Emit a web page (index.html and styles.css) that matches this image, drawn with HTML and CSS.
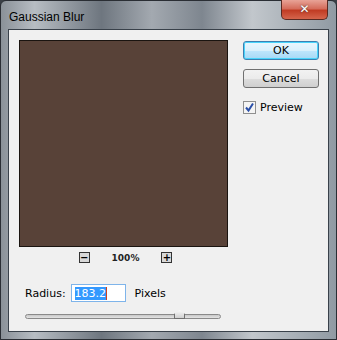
FILE: index.html
```html
<!DOCTYPE html>
<html lang="en">
<head>
    <meta charset="UTF-8">
    <title>Gaussian Blur</title>
    <link rel="stylesheet" href="styles.css">
</head>
<body>
    <div class="window">
        <div class="titlebar">
            <span class="title">Gaussian Blur</span>
            <div class="close-btn">&#x2715;</div>
        </div>
        <div class="client">
            <div class="main">
                <div class="left">
                    <div class="preview"></div>
                    <div class="zoom-row">
                        <span class="zoom-btn">&minus;</span>
                        <span class="zoom-level">100%</span>
                        <span class="zoom-btn">+</span>
                    </div>
                </div>
                <div class="right">
                    <button class="btn btn-default">OK</button>
                    <button class="btn">Cancel</button>
                    <label class="check">
                        <span class="box">
                            <svg width="11" height="11" viewBox="0 0 11 11"><path d="M2 5.5 L4.5 8.5 L9 1.5" fill="none" stroke="#2a4fa8" stroke-width="2"/></svg>
                        </span>
                        Preview
                    </label>
                </div>
            </div>
            <div class="radius-row">
                <span class="label">Radius:</span>
                <div class="input"><span class="sel">183.2</span><span class="caret"></span></div>
                <span class="label">Pixels</span>
            </div>
            <div class="slider">
                <div class="track"></div>
                <div class="thumb"></div>
            </div>
        </div>
    </div>
</body>
</html>
```

FILE: styles.css
```css
body {
    margin: 0;
    font-family: "DejaVu Sans", Tahoma, sans-serif;
    font-size: 11px;
    background: #3a3f46;
}
.window {
    width: 337px;
    height: 340px;
    box-sizing: border-box;
    padding: 0 7px 7px 7px;
    border: 1px solid #2a2e34;
    border-radius: 6px 6px 0 0;
    background: linear-gradient(90deg, #8a9198 0%, #b7bdc3 10%, #6e767f 30%, #a3a9b0 45%, #7e868f 60%, #c2c7cc 75%, #909aa3 100%);
    display: flex;
    flex-direction: column;
}
.titlebar {
    height: 28px;
    display: flex;
    justify-content: space-between;
    align-items: flex-start;
}
.title {
    font-family: "Liberation Sans", Arial, sans-serif;
    font-size: 12px;
    color: #000;
    margin-top: 9px;
    margin-left: 1px;
}
.close-btn {
    width: 45px;
    height: 19px;
    margin-top: -1px;
    margin-right: 1px;
    border: 1px solid #5a2a22;
    border-top: none;
    border-radius: 0 0 5px 5px;
    background: linear-gradient(#e8a397 0%, #d56d5c 45%, #c13c24 55%, #d5654c 100%);
    color: #fff;
    font-weight: bold;
    font-size: 12px;
    text-align: center;
    line-height: 18px;
    text-shadow: 0 0 2px #333;
}
.client {
    flex: 1;
    background: #f0f0f0;
    border: 1px solid #39414a;
    padding: 10px 0 0 10px;
    display: flex;
    flex-direction: column;
}
.main {
    display: flex;
}
.left {
    width: 211px;
}
.preview {
    width: 207px;
    height: 205px;
    border: 1px solid #1a1410;
    background: #584238;
}
.zoom-row {
    display: flex;
    align-items: center;
    justify-content: center;
    gap: 22px;
    margin-top: 5px;
    padding-left: 2px;
}
.zoom-btn {
    width: 9px;
    height: 9px;
    border: 1px solid #333;
    background: #d8d8d8;
    font-size: 10px;
    line-height: 9px;
    text-align: center;
    font-weight: bold;
}
.zoom-level {
    font-size: 9px;
    font-weight: bold;
    color: #222;
}
.right {
    margin-left: 13px;
    display: flex;
    flex-direction: column;
    gap: 9px;
    padding-top: 1px;
}
.btn {
    width: 76px;
    height: 19px;
    padding: 0;
    font-family: "DejaVu Sans", Tahoma, sans-serif;
    font-size: 11px;
    color: #000;
    border: 1px solid #707070;
    border-radius: 3px;
    background: linear-gradient(#f2f2f2 0%, #ebebeb 50%, #dddddd 51%, #cfcfcf 100%);
}
.btn-default {
    border-color: #3c7fb1;
    box-shadow: inset 0 0 0 1px #48d4fb;
    background: linear-gradient(#eaf6fd 0%, #d9f0fc 50%, #bee6fd 51%, #a7d9f5 100%);
}
.check {
    display: flex;
    align-items: center;
    gap: 4px;
    margin-top: 4px;
    font-size: 11px;
}
.box {
    width: 11px;
    height: 11px;
    border: 1px solid #8f8f8f;
    background: #f4f4f4;
    display: flex;
}
.radius-row {
    display: flex;
    align-items: center;
    margin-top: 21px;
    padding-left: 6px;
}
.label {
    font-size: 11px;
}
.input {
    width: 55px;
    height: 18px;
    margin: 0 9px 0 5px;
    border: 1px solid #7eb4ea;
    background: #fff;
    display: flex;
    align-items: center;
    padding-left: 3px;
    box-sizing: border-box;
}
.sel {
    background: #3399ff;
    color: #fff;
    font-size: 11px;
    line-height: 13px;
}
.caret {
    width: 1px;
    height: 13px;
    background: #c42;
}
.slider {
    position: relative;
    width: 196px;
    height: 12px;
    margin-top: 8px;
    margin-left: 6px;
}
.track {
    margin-top: 4px;
    height: 3px;
    border: 1px solid #8a8a8a;
    border-radius: 3px;
    background: linear-gradient(#c8c8c8, #e4e4e4);
}
.thumb {
    position: absolute;
    left: 149px;
    top: 0;
    width: 9px;
    height: 8px;
    background: linear-gradient(#fafafa, #d0d0d0);
    border: 1px solid #707070;
    border-top: none;
    clip-path: polygon(50% 0, 100% 45%, 100% 100%, 0 100%, 0 45%);
}
```
